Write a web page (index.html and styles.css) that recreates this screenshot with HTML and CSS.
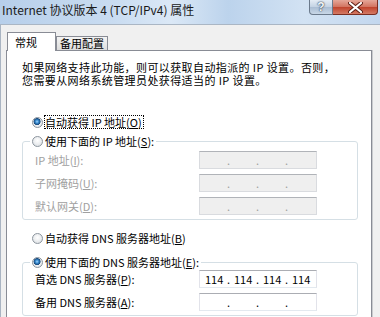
FILE: index.html
```html
<!DOCTYPE html>
<html lang="zh-CN">
<head>
  <meta charset="UTF-8">
  <title>Internet 协议版本 4 (TCP/IPv4) 属性</title>
  <link rel="stylesheet" href="styles.css">
</head>
<body>

<div class="ventana">
  <div class="barra-titulo">
    <span class="titulo">Internet 协议版本 4 (TCP/IPv4) 属性</span>
    <div class="botones-titulo">
      <span class="btn-ayuda">?</span>
      <span class="btn-cerrar">
        <svg width="15" height="11" viewBox="0 0 15 11">
          <path d="M2 1 L13 10 M13 1 L2 10" stroke="#5a1c12" stroke-width="4" stroke-linecap="round"/>
          <path d="M2 1 L13 10 M13 1 L2 10" stroke="#ffffff" stroke-width="2.2" stroke-linecap="round"/>
        </svg>
      </span>
    </div>
  </div>

  <div class="cliente">
    <div class="pestanas">
      <div class="pestana activa">常规</div>
      <div class="pestana">备用配置</div>
    </div>

    <div class="panel">
      <p class="intro">如果网络支持此功能，则可以获取自动指派的 IP 设置。否则，<br>您需要从网络系统管理员处获得适当的 IP 设置。</p>

      <div class="opcion">
        <span class="radio marcado"></span>
        <span class="foco">自动获得 IP 地址(<u>O</u>)</span>
      </div>

      <fieldset class="grupo">
        <legend class="opcion">
          <span class="radio"></span>
          <span class="texto-opcion">使用下面的 IP 地址(<u>S</u>):</span>
        </legend>
        <div class="fila deshabilitada">
          <span class="etiqueta">IP 地址(<u>I</u>):</span>
          <span class="caja-ip"><span class="num"></span><span class="punto">.</span><span class="num"></span><span class="punto">.</span><span class="num"></span><span class="punto">.</span><span class="num"></span></span>
        </div>
        <div class="fila deshabilitada">
          <span class="etiqueta">子网掩码(<u>U</u>):</span>
          <span class="caja-ip"><span class="num"></span><span class="punto">.</span><span class="num"></span><span class="punto">.</span><span class="num"></span><span class="punto">.</span><span class="num"></span></span>
        </div>
        <div class="fila deshabilitada">
          <span class="etiqueta">默认网关(<u>D</u>):</span>
          <span class="caja-ip"><span class="num"></span><span class="punto">.</span><span class="num"></span><span class="punto">.</span><span class="num"></span><span class="punto">.</span><span class="num"></span></span>
        </div>
      </fieldset>

      <div class="opcion opcion-dns">
        <span class="radio"></span>
        <span class="texto-opcion">自动获得 DNS 服务器地址(<u>B</u>)</span>
      </div>

      <fieldset class="grupo grupo-dns">
        <legend class="opcion">
          <span class="radio marcado"></span>
          <span class="texto-opcion">使用下面的 DNS 服务器地址(<u>E</u>):</span>
        </legend>
        <div class="fila">
          <span class="etiqueta">首选 DNS 服务器(<u>P</u>):</span>
          <span class="caja-ip"><span class="num">114</span><span class="punto">.</span><span class="num">114</span><span class="punto">.</span><span class="num">114</span><span class="punto">.</span><span class="num">114</span></span>
        </div>
        <div class="fila">
          <span class="etiqueta">备用 DNS 服务器(<u>A</u>):</span>
          <span class="caja-ip"><span class="num"></span><span class="punto">.</span><span class="num"></span><span class="punto">.</span><span class="num"></span><span class="punto">.</span><span class="num"></span></span>
        </div>
      </fieldset>
    </div>
  </div>
</div>

</body>
</html>
```

FILE: styles.css
```css
body {
  margin: 0;
  padding: 0;
  font-family: "Noto Sans CJK SC", "Liberation Sans", sans-serif;
  font-size: 11px;
  color: #000;
  background-color: #f0f0f0;
}

.ventana {
  width: 380px;
  height: 317px;
  overflow: hidden;
  background-color: #f0f0f0;
}

.barra-titulo {
  height: 24px;
  display: flex;
  align-items: flex-start;
  padding-left: 2px;
  border-bottom: 1px solid #aab6c4;
  background: linear-gradient(to right, #b7cfea 0%, #c9dcf1 30%, #dbe8f6 45%, #bcd3ec 60%, #d2e2f3 80%, #c3d7ee 100%);
}

.titulo {
  padding-top: 3px;
  font-family: "Noto Sans CJK SC", "Liberation Sans", sans-serif;
  font-size: 12px;
  line-height: 14px;
  color: #1a1a1a;
}

.botones-titulo {
  margin-left: auto;
  margin-right: 2px;
  display: flex;
}

.btn-ayuda {
  width: 24px;
  height: 15px;
  box-sizing: border-box;
  border: 1px solid #6b7a8c;
  border-top: none;
  border-radius: 0 0 0 4px;
  background: linear-gradient(#e4ecf5, #c3d2e3 50%, #aabdd3 51%, #c8d7e7);
  color: #f4f7fb;
  font-family: "Liberation Sans", sans-serif;
  font-weight: bold;
  font-size: 12px;
  line-height: 14px;
  text-align: center;
  text-shadow: 0 0 2px #2a3a4e, 0 0 1px #2a3a4e;
}

.btn-cerrar {
  width: 45px;
  height: 15px;
  box-sizing: border-box;
  border: 1px solid #7a2e22;
  border-top: none;
  border-left: none;
  border-radius: 0 0 4px 0;
  background: linear-gradient(#e5a799, #d2735f 50%, #c0432c 51%, #d47a64);
  display: flex;
  align-items: center;
  justify-content: center;
}

.cliente {
  border-left: 1px solid #a9b4c2;
  padding: 7px 8px 0 5px;
}

.pestanas {
  display: flex;
  align-items: flex-end;
  padding-left: 1px;
}

.pestana {
  box-sizing: border-box;
  height: 14px;
  width: 52px;
  padding-left: 3px;
  border: 1px solid #898c95;
  border-bottom: none;
  background: linear-gradient(#f4f4f4, #e9e9e9 50%, #dcdcdc);
  line-height: 12px;
}

.pestana.activa {
  position: relative;
  z-index: 1;
  height: 19px;
  width: 49px;
  padding-left: 7px;
  padding-top: 2px;
  margin-bottom: -1px;
  background: #ffffff;
  line-height: 14px;
}

.panel {
  border: 1px solid #898c95;
  background-color: #ffffff;
  box-shadow: 1px 0 0 #c9cbce;
  height: 290px;
}

.intro {
  margin: 10px 0 0 15px;
  line-height: 13px;
  letter-spacing: 0.4px;
  white-space: nowrap;
}

.opcion {
  display: flex;
  align-items: center;
  height: 14px;
  line-height: 14px;
  margin: 28px 0 0 25px;
  white-space: nowrap;
}

.radio {
  width: 11px;
  height: 11px;
  box-sizing: border-box;
  border-radius: 50%;
  border: 1px solid #8c959e;
  background: radial-gradient(circle at 50% 40%, #ffffff 0, #eceef0 50%, #d3d8dd 100%);
  margin-right: 1px;
  flex-shrink: 0;
}

.radio.marcado {
  background: radial-gradient(circle at 45% 40%, #a9d8fa 0, #3b8fd4 1.5px, #18497c 3.2px, #eef0f2 3.8px, #d6dadf 100%);
}

.foco {
  border: 1px dotted #000;
  padding: 0 1px 0 0;
  line-height: 12px;
}

.texto-opcion {
  padding-left: 1px;
}

.grupo {
  margin: 5px 13px 0 15px;
  padding: 3px 0 4px 12px;
  border: 1px solid #d5dfe5;
  border-radius: 3px;
  min-width: 0;
}

.grupo legend.opcion {
  margin: 0 0 0 -5px;
  padding: 0 2px;
}

.opcion-dns {
  margin-top: 11px;
}

.grupo-dns {
  margin-top: 10px;
  padding-top: 1px;
}

.fila {
  display: flex;
  align-items: center;
  height: 18px;
  margin-bottom: 5px;
}

.fila:last-child {
  margin-bottom: 0;
}

.etiqueta {
  width: 164px;
  line-height: 14px;
  white-space: nowrap;
}

.deshabilitada .etiqueta {
  color: #a0a0a0;
}

.caja-ip {
  display: flex;
  width: 118px;
  height: 18px;
  box-sizing: border-box;
  padding-left: 5px;
  border: 1px solid #e2e3ea;
  border-top-color: #abadb3;
  border-bottom-color: #e3e9ef;
  background-color: #ffffff;
  line-height: 16px;
}

.deshabilitada .caja-ip {
  background-color: #efefef;
  border-color: #d9dbdf;
  border-top-color: #b0b3b8;
  color: #a0a0a0;
}

.num {
  width: 18px;
  text-align: center;
}

.punto {
  width: 11px;
  text-align: center;
}
```
